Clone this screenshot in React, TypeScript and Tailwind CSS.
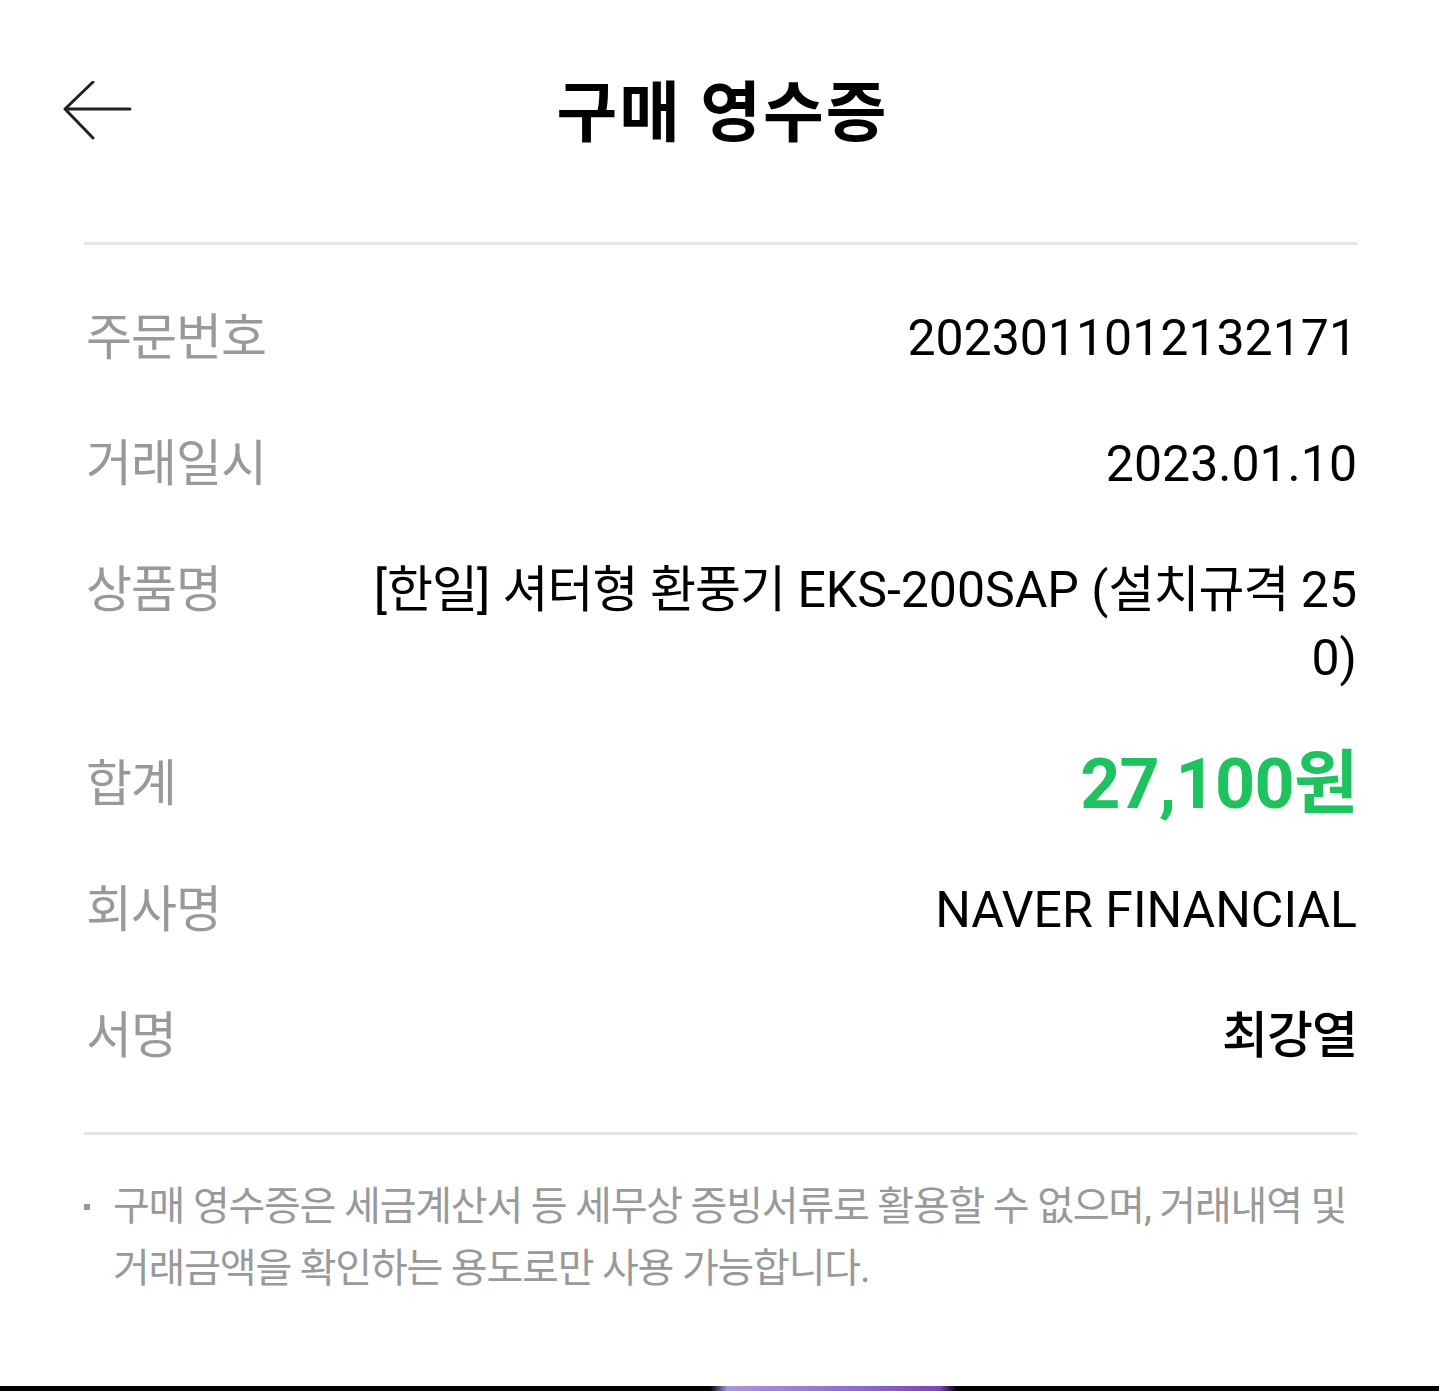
const rows = [
  { label: "주문번호", value: "2023011012132171" },
  { label: "거래일시", value: "2023.01.10" },
];

const BackArrow = () => (
  <svg width="70" height="60" viewBox="0 0 70 60" fill="none">
    <path
      d="M68 28H3M31 1L3 28L31 57"
      stroke="#222"
      strokeWidth="3"
      strokeLinecap="round"
      strokeLinejoin="round"
    />
  </svg>
);

const Label = ({ children }: { children: React.ReactNode }) => (
  <div className="shrink-0 pl-[2px] text-[50px] leading-[68px] tracking-[-0.02em] text-[#999]">
    {children}
  </div>
);

// hangul runs sit a little tighter than the latin ones
const Ko = ({ children }: { children: React.ReactNode }) => (
  <span className="tracking-[-0.02em]">{children}</span>
);

export default function App() {
  return (
    <div className="flex min-h-[1391px] flex-col bg-white font-[Roboto,'Noto_Sans_CJK_KR',sans-serif] text-black">
      {/* header */}
      <div className="grid h-[228px] grid-cols-[1fr_auto_1fr] items-center">
        <div className="-mt-[6px] pl-[62px]">
          <BackArrow />
        </div>
        <h1 className="pl-[6px] text-[66px] font-bold leading-none tracking-[0.03em]">
          구매 영수증
        </h1>
        <div />
      </div>

      <div className="ml-[84px] mr-[82px] mt-[14px] h-[3px] bg-[#e6e6e6]" />

      {/* receipt rows */}
      <div className="ml-[84px] mr-[82px] flex flex-col gap-[58px] pt-[59px]">
        {rows.map((r) => (
          <div key={r.label} className="flex items-start justify-between">
            <Label>{r.label}</Label>
            <div className="text-right text-[50px] leading-[68px]">{r.value}</div>
          </div>
        ))}

        <div className="flex items-start justify-between">
          <Label>상품명</Label>
          <div className="w-[995px] break-all text-right text-[50px] leading-[68px]">
            [<Ko>한일</Ko>] <Ko>셔터형</Ko> <Ko>환풍기</Ko> EKS-200SAP (<Ko>설치규격</Ko> 250)
          </div>
        </div>

        <div className="flex items-center justify-between">
          <Label>합계</Label>
          <div className="text-right text-[70px] font-bold leading-[68px] tracking-[-0.01em] text-[#1ec25f]">
            27,100<Ko>원</Ko>
          </div>
        </div>

        <div className="flex items-start justify-between">
          <Label>회사명</Label>
          <div className="text-right text-[50px] leading-[68px]">NAVER FINANCIAL</div>
        </div>

        <div className="flex items-start justify-between">
          <Label>서명</Label>
          <div className="text-right text-[50px] font-medium leading-[68px] tracking-[-0.02em]">
            최강열
          </div>
        </div>
      </div>

      <div className="ml-[84px] mr-[82px] mt-[62px] h-[3px] bg-[#e6e6e6]" />

      {/* notice */}
      <div className="ml-[84px] mr-[82px] mt-[41px] flex">
        <div className="w-[29px] shrink-0 pt-[28px]">
          <div className="h-[6px] w-[6px] bg-[#999]" />
        </div>
        <p className="text-[40px] leading-[62px] tracking-[-0.03em] text-[#999]">
          구매 영수증은 세금계산서 등 세무상 증빙서류로 활용할 수 없으며, 거래내역 및 거래금액을 확인하는 용도로만 사용 가능합니다.
        </p>
      </div>

      <div className="flex-1" />

      {/* nav bar */}
      <div className="h-[5px] bg-black">
        <div className="ml-[710px] h-full w-[247px] bg-[linear-gradient(90deg,#000,#a996da_7%,#9170cc_55%,#7a46b8_93%,#000)]" />
      </div>
    </div>
  );
}
